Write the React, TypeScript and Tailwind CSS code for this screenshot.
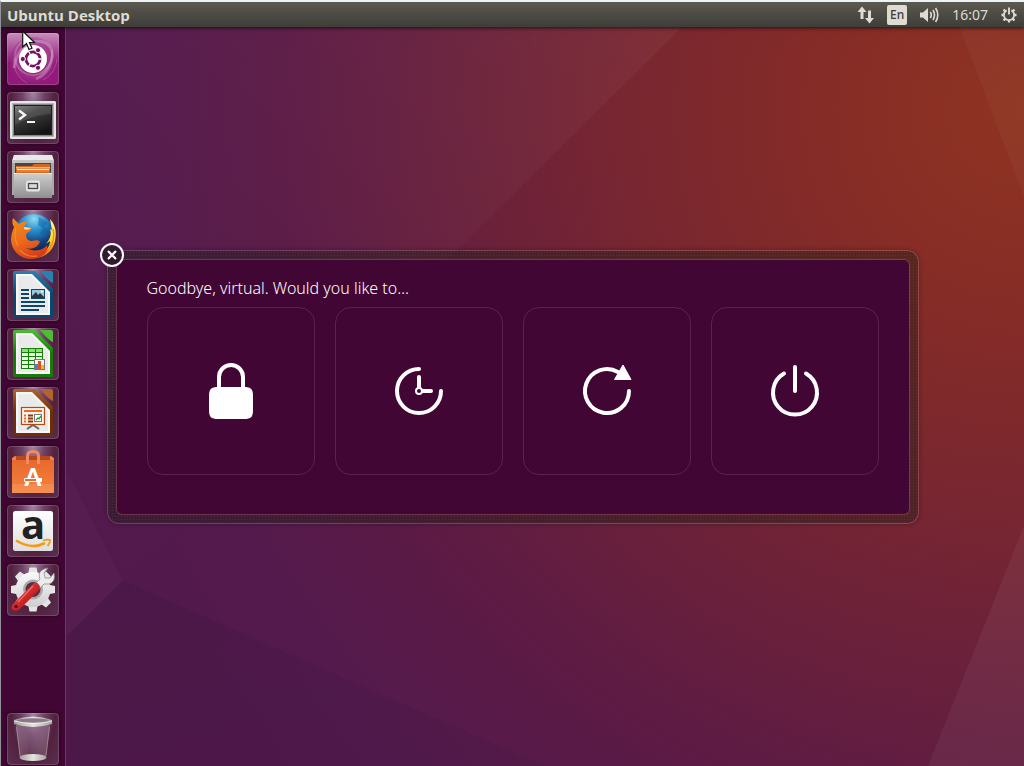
import type { ReactNode } from "react";

function Wallpaper() {
  return (
    <svg
      className="absolute inset-0 h-full w-full"
      viewBox="0 0 1024 766"
      preserveAspectRatio="none"
      aria-hidden="true"
    >
      <defs>
        <radialGradient id="wall" gradientUnits="userSpaceOnUse" cx="1024" cy="110" r="1000">
          <stop offset="0" stopColor="#8f3421" />
          <stop offset="0.2" stopColor="#862c27" />
          <stop offset="0.4" stopColor="#782631" />
          <stop offset="0.58" stopColor="#68203c" />
          <stop offset="0.75" stopColor="#5b1a46" />
          <stop offset="0.9" stopColor="#541a4e" />
          <stop offset="1" stopColor="#52194c" />
        </radialGradient>
        <linearGradient id="facet" x1="1" y1="0" x2="0" y2="1">
          <stop offset="0" stopColor="#fff" stopOpacity="0.04" />
          <stop offset="0.5" stopColor="#fff" stopOpacity="0.015" />
          <stop offset="1" stopColor="#fff" stopOpacity="0" />
        </linearGradient>
        <linearGradient id="shade" x1="0" y1="0" x2="1" y2="1">
          <stop offset="0" stopColor="#2b1236" stopOpacity="0.18" />
          <stop offset="1" stopColor="#2b1236" stopOpacity="0.1" />
        </linearGradient>
      </defs>
      <rect width="1024" height="766" fill="url(#wall)" />
      <path d="M0 0H707L122 580L66 470L0 350Z" fill="url(#facet)" />
      <path d="M66 470L122 580L66 636Z" fill="#fff" fillOpacity="0.025" />
      <path d="M122 580L545 766H0V700Z" fill="url(#shade)" />
      <path d="M950 0H1024V195Z" fill="#fff" fillOpacity="0.03" />
      <path d="M1024 525V766H928Z" fill="#fff" fillOpacity="0.05" />
    </svg>
  );
}

function Art({ children }: { children: ReactNode }) {
  return (
    <svg className="h-full w-full overflow-visible" viewBox="0 0 52 52" aria-hidden="true">
      {children}
    </svg>
  );
}

function DashArt() {
  return (
    <Art>
      <defs>
        <radialGradient id="dashGlow" cx="0.5" cy="0.5" r="0.6">
          <stop offset="0" stopColor="#d58cc4" />
          <stop offset="0.6" stopColor="#a3388c" stopOpacity="0.7" />
          <stop offset="1" stopColor="#8f1a78" stopOpacity="0" />
        </radialGradient>
        <linearGradient id="dashTop" x1="0" y1="0" x2="0" y2="1">
          <stop offset="0" stopColor="#fff" stopOpacity="0.5" />
          <stop offset="1" stopColor="#fff" stopOpacity="0" />
        </linearGradient>
      </defs>
      <rect width="52" height="52" rx="3" fill="#911a7a" />
      <rect width="52" height="30" rx="3" fill="url(#dashTop)" />
      <circle cx="26" cy="27" r="23" fill="url(#dashGlow)" />
      <path d="M7 35C10 15 25 4 39 10C51 17 45 39 29 46" fill="none" stroke="#fff" strokeOpacity="0.25" strokeWidth="3" />
      <path d="M45 17C47 36 30 47 16 39C5 31 6 16 15 9" fill="none" stroke="#fff" strokeOpacity="0.2" strokeWidth="2" />
      <path d="M20 50C9 44 6 33 7 25M36 47C44 43 49 36 50 26" fill="none" stroke="#fff" strokeOpacity="0.2" strokeWidth="1" />
      <circle cx="26" cy="27" r="14.5" fill="#6b0f58" fillOpacity="0.4" />
      <circle cx="26" cy="26" r="14" fill="#fff" />
      <circle cx="26" cy="26" r="7" fill="none" stroke="#74145f" strokeWidth="3" />
      <path d="M26 26L34.5 26M26 26L21.7 18.5M26 26L21.7 33.5" stroke="#fff" strokeWidth="1.3" />
      <g fill="#74145f" stroke="#fff" strokeWidth="1">
        <circle cx="15.8" cy="26" r="2.6" />
        <circle cx="31" cy="17.2" r="2.6" />
        <circle cx="31" cy="34.8" r="2.6" />
      </g>
      <circle cx="26" cy="26" r="5.5" fill="#fff" />
    </Art>
  );
}

function TerminalArt() {
  return (
    <Art>
      <defs>
        <linearGradient id="termScreen" x1="0" y1="0" x2="0.5" y2="1">
          <stop offset="0" stopColor="#7b7b7b" />
          <stop offset="0.4" stopColor="#3f3f3f" />
          <stop offset="1" stopColor="#151515" />
        </linearGradient>
      </defs>
      <rect x="3" y="9" width="46" height="38" rx="1.5" fill="#b5b5b5" />
      <rect x="4" y="10" width="44" height="36" rx="1" fill="none" stroke="#e6e6e6" strokeWidth="2" />
      <rect x="6.500" y="12.500" width="39" height="31" fill="url(#termScreen)" stroke="#858585" />
      <rect x="7.500" y="13.500" width="37" height="29" fill="none" stroke="#1e1e1e" />
      <path d="M8 14H44V22C30 23 18 27 8 33Z" fill="#fff" fillOpacity="0.1" />
      <path d="M12 18.500L18 23L12 27.500" fill="none" stroke="#f5f5f5" strokeWidth="2.4" />
      <path d="M20 30H28" stroke="#f5f5f5" strokeWidth="2" />
    </Art>
  );
}

function FilesArt() {
  return (
    <Art>
      <defs>
        <linearGradient id="filesFront" x1="0" y1="0" x2="0" y2="1">
          <stop offset="0" stopColor="#cfcfcf" />
          <stop offset="1" stopColor="#8f8f8f" />
        </linearGradient>
      </defs>
      <path d="M7 4H45L47 10V44H5V10Z" fill="#a8a8a8" />
      <path d="M7 4H45L47 10H5Z" fill="#e9e9e9" />
      <rect x="5" y="9" width="42" height="3" fill="#c4c4c4" />
      <rect x="8" y="12" width="36" height="10" fill="#474747" />
      <path d="M9 15H25L27 13H43V22H9Z" fill="#d9661e" />
      <rect x="9" y="16" width="34" height="1.500" fill="#f5b883" />
      <rect x="10" y="18" width="32" height="3" fill="#f07c2d" />
      <rect x="10" y="18" width="32" height="1" fill="#fff0d8" />
      <path d="M7 22H45V47H7Z" fill="url(#filesFront)" />
      <path d="M7 22.500H45" stroke="#ededed" />
      <rect x="19" y="29.500" width="14" height="11" rx="2" fill="#e4e4e4" />
      <rect x="21.500" y="32.500" width="9" height="5" fill="#d9d9d9" stroke="#484848" strokeWidth="1.300" />
    </Art>
  );
}

function FirefoxArt() {
  return (
    <Art>
      <defs>
        <radialGradient id="ffGlobe" cx="0.5" cy="0.12" r="0.8">
          <stop offset="0" stopColor="#8fdcf5" />
          <stop offset="0.35" stopColor="#2a91cf" />
          <stop offset="0.75" stopColor="#12427f" />
          <stop offset="1" stopColor="#0c2757" />
        </radialGradient>
        <linearGradient id="ffFox" x1="0.2" y1="0" x2="0.6" y2="1">
          <stop offset="0" stopColor="#ee8a1c" />
          <stop offset="0.5" stopColor="#ed6c1c" />
          <stop offset="1" stopColor="#d4391a" />
        </linearGradient>
        <linearGradient id="ffTail" x1="0" y1="0" x2="0" y2="1">
          <stop offset="0" stopColor="#fff5a0" />
          <stop offset="0.5" stopColor="#ffdc30" />
          <stop offset="1" stopColor="#ef7d1a" />
        </linearGradient>
      </defs>
      <circle cx="27" cy="24" r="20" fill="url(#ffGlobe)" />
      <path d="M32 7L40 13L37 17L42 20L38 26L33 23L36 18L31 15Z" fill="#0f5f9d" fillOpacity="0.5" />
      <path d="M43 9C48 14 50 21 48 31C46 41 38 47 29 48C37 44 43 37 43 31L39 34C43 29 45 24 43 19L45 20Z" fill="url(#ffTail)" />
      <path d="M46 19C49 31 43 41 34 46" fill="none" stroke="#f28a1c" strokeWidth="1.500" />
      <path d="M6 8L12 14C14 12 18 11 21 11L17 17L25 18C24 21 21 22 19 24C19 29 21 31 25 31C28 31 30 29 33 32C30 38 25 40 19 38C26 42 36 41 40 35C42 42 36 48 26 49C13 50 4 40 4 29C4 24 6 20 7 17C5 14 5 11 6 8Z" fill="url(#ffFox)" />
      <path d="M9 18C7 25 8 31 11 36M13 40C18 46 25 47 30 46" fill="none" stroke="#f99b2d" strokeOpacity="0.6" strokeWidth="1.400" />
      <path d="M17 17L24 18C22 20 19 20 17 19Z" fill="#ffd79a" />
    </Art>
  );
}

function OfficePage({ dark, light, id, children }: { dark: string; light: string; id: string; children: ReactNode }) {
  return (
    <Art>
      <defs>
        <linearGradient id={id} x1="0" y1="0" x2="0" y2="1">
          <stop offset="0" stopColor={light} />
          <stop offset="0.5" stopColor={dark} />
          <stop offset="1" stopColor={dark} />
        </linearGradient>
      </defs>
      <path d="M8 2H28L46 20V49H8Q6 49 6 47V4Q6 2 8 2Z" fill={`url(#${id})`} />
      <path d="M9 5H25L43 23V46H9Z" fill="#f7f7f7" />
      <path d="M11 7H24L41 24V44H11Z" fill="#eaeaea" />
      <path d="M33 2H44Q46 2 46 4V14Q41 12 33 2Z" fill={light} />
      <path d="M33 2L46 14" stroke={light} strokeOpacity="0.5" />
      {children}
    </Art>
  );
}

function WriterArt() {
  return (
    <OfficePage id="writerEdge" dark="#0a4770" light="#2a7fb5">
      <g fill="#0a4770">
        <rect x="14" y="20" width="8" height="2" />
        <rect x="14" y="24" width="8" height="2" />
        <rect x="14" y="28" width="8" height="2" />
        <rect x="14" y="32" width="24" height="2" />
        <rect x="14" y="36" width="24" height="2" />
        <rect x="14" y="40" width="18" height="2" />
      </g>
      <rect x="24.500" y="20.500" width="13" height="9" fill="#93c8e8" stroke="#0a4770" />
      <path d="M25 29V27L29 23L31 26L33 24L37 28V29Z" fill="#333" />
      <circle cx="35" cy="22.500" r="1.200" fill="#f9f1a0" />
    </OfficePage>
  );
}

function CalcArt() {
  return (
    <OfficePage id="calcEdge" dark="#177a0a" light="#4fbb37">
      <rect x="14.500" y="20.500" width="21" height="20" fill="#e8fbe0" stroke="#138006" />
      <rect x="15" y="21" width="20" height="3" fill="#90dd79" />
      <path d="M15 24.500H35M15 28.500H35M15 32.500H35M15 36.500H35M21.500 21V40M28.500 21V40" stroke="#138006" />
      <rect x="27.500" y="31.500" width="10" height="10" fill="#f4f4f4" stroke="#777" />
      <rect x="28" y="36" width="3" height="5" fill="#3b86cc" />
      <rect x="31" y="33" width="3" height="8" fill="#dd5515" />
      <rect x="34" y="37" width="3" height="4" fill="#edb72a" />
    </OfficePage>
  );
}

function ImpressArt() {
  return (
    <OfficePage id="impressEdge" dark="#6f2d08" light="#b1642c">
      <path d="M20 42L26 38L32 42" fill="none" stroke="#666" strokeWidth="2" />
      <rect x="14.500" y="20.500" width="23" height="17" fill="#fff1e8" stroke="#b04a12" strokeWidth="1.200" />
      <rect x="17" y="23" width="18" height="2" fill="#dd6f2a" />
      <path d="M17 28.500H19M17 31.500H19M17 34.500H19" stroke="#dd6f2a" strokeWidth="2" />
      <path d="M21 28.500H26M21 31.500H26M21 34.500H26" stroke="#8c380e" strokeWidth="2" />
      <rect x="27.500" y="27.500" width="7" height="7" fill="#fff" stroke="#777" />
      <path d="M29 33L31 31L32 32L34 29" fill="none" stroke="#27a135" strokeWidth="1.400" />
    </OfficePage>
  );
}

function SoftwareArt() {
  return (
    <Art>
      <defs>
        <linearGradient id="bag" x1="0" y1="0" x2="0" y2="1">
          <stop offset="0" stopColor="#e8692f" />
          <stop offset="1" stopColor="#f4833d" />
        </linearGradient>
      </defs>
      <path d="M5 13L7 10H45L47 13V16H5Z" fill="#b54a1c" />
      <path d="M5 12L9 10V15H5ZM47 12L43 10V15H47Z" fill="#ee8253" />
      <rect x="5" y="14" width="42" height="33" fill="url(#bag)" />
      <rect x="5" y="38" width="42" height="9" fill="#fff" fillOpacity="0.1" />
      <path d="M20.500 18V10Q20.500 5.500 26 5.500Q31.500 5.500 31.500 10V18" fill="none" stroke="#ef8b65" strokeWidth="3" />
      <text x="26" y="40" textAnchor="middle" fontFamily="Lato, sans-serif" fontWeight="900" fontSize="24" fill="#fff">A</text>
      <rect x="17" y="32" width="18" height="4" rx="1" fill="#fff" />
      <rect x="18" y="33" width="11" height="2" fill="#eb6b2c" />
    </Art>
  );
}

function AmazonArt() {
  return (
    <Art>
      <defs>
        <linearGradient id="amazonTile" x1="0" y1="0" x2="0" y2="1">
          <stop offset="0" stopColor="#fff" />
          <stop offset="1" stopColor="#dedede" />
        </linearGradient>
      </defs>
      <rect x="6" y="6" width="40" height="40" rx="2.500" fill="url(#amazonTile)" />
      <text x="26" y="34" textAnchor="middle" fontFamily="'Open Sans', sans-serif" fontWeight="700" fontSize="40" fill="#222">a</text>
      <path d="M9 35.500Q25 45 38 38" fill="none" stroke="#f59a14" strokeWidth="2.600" />
      <path d="M36 35.500Q41 34 43 35Q43.500 37 40.500 41" fill="none" stroke="#f59a14" strokeWidth="1.800" />
    </Art>
  );
}

const gearTeeth = [0, 45, 90, 135, 180, 225, 270, 315];

function SettingsArt() {
  return (
    <Art>
      <defs>
        <linearGradient id="gearFill" x1="0" y1="0" x2="0" y2="1">
          <stop offset="0" stopColor="#fafafa" />
          <stop offset="1" stopColor="#cecece" />
        </linearGradient>
        <linearGradient id="handle" x1="0" y1="0" x2="1" y2="1">
          <stop offset="0" stopColor="#ef5d57" />
          <stop offset="0.6" stopColor="#c91e1e" />
          <stop offset="1" stopColor="#8d0c0c" />
        </linearGradient>
      </defs>
      <g fill="#e5e5e5">
        {gearTeeth.map((angle) => (
          <path key={angle} d="M21 11L22.500 3.500H29.500L31 11Z" transform={`rotate(${angle} 26 25.500)`} />
        ))}
      </g>
      <circle cx="26" cy="25.500" r="17.500" fill="url(#gearFill)" />
      <circle cx="26" cy="25.500" r="10" fill="#a9a9a9" />
      <circle cx="26" cy="25.500" r="7.500" fill="#5a2c4c" />
      <path d="M26 22L33 15Q30 8 37 5L41 4L37 9L38 14L43 14L47 9Q49 18 42 20L37 20L29 28Z" fill="#ececec" stroke="#8d8d8d" strokeWidth="0.800" />
      <path d="M27 19Q31 18 32 21Q34 23 32 26L14 44Q9 49 5 45Q4 42 7 39Z" fill="url(#handle)" />
      <path d="M26 22L11 38" stroke="#ff9b94" strokeOpacity="0.6" strokeWidth="1.300" />
      <circle cx="9" cy="42.500" r="1.800" fill="#650d12" />
    </Art>
  );
}

function TrashArt() {
  return (
    <Art>
      <defs>
        <linearGradient id="trashBody" x1="0" y1="0" x2="1" y2="0">
          <stop offset="0" stopColor="#fff" stopOpacity="0.25" />
          <stop offset="0.4" stopColor="#fff" stopOpacity="0.1" />
          <stop offset="1" stopColor="#fff" stopOpacity="0.22" />
        </linearGradient>
        <linearGradient id="trashRim" x1="0" y1="0" x2="1" y2="0">
          <stop offset="0" stopColor="#9f9f9c" />
          <stop offset="0.5" stopColor="#e4e4e0" />
          <stop offset="1" stopColor="#a5a5a2" />
        </linearGradient>
      </defs>
      <path d="M9 12H43L39 44Q26 50 13 44Z" fill="url(#trashBody)" />
      <path d="M9.500 14L13 43M42.500 14L39 43" stroke="#c9b6c5" strokeOpacity="0.5" />
      <ellipse cx="26" cy="44.500" rx="13.500" ry="3.500" fill="url(#trashRim)" />
      <path d="M7 7Q26 0 45 7V11Q26 17 7 11Z" fill="url(#trashRim)" />
      <ellipse cx="26" cy="7.500" rx="16" ry="2.200" fill="#8d7888" />
      <path d="M7 8Q26 13 45 8" fill="none" stroke="#fafaf5" strokeOpacity="0.7" />
    </Art>
  );
}

const apps = [
  { name: "Terminal", art: <TerminalArt /> },
  { name: "Files", art: <FilesArt /> },
  { name: "Firefox Web Browser", art: <FirefoxArt /> },
  { name: "LibreOffice Writer", art: <WriterArt /> },
  { name: "LibreOffice Calc", art: <CalcArt /> },
  { name: "LibreOffice Impress", art: <ImpressArt /> },
  { name: "Ubuntu Software", art: <SoftwareArt /> },
  { name: "Amazon", art: <AmazonArt /> },
  { name: "System Settings", art: <SettingsArt /> },
];

function LauncherTile({ name, children }: { name: string; children: ReactNode }) {
  return (
    <button
      type="button"
      aria-label={name}
      className="relative size-[52px] shrink-0 rounded bg-[radial-gradient(ellipse_at_50%_0%,#a487a0_0%,#6f4267_30%,#52213f_60%,#5a2e50_100%)] shadow-[0_0_3px_#1b0015]"
    >
      {children}
      <span className="pointer-events-none absolute inset-0 rounded border border-white/15" />
    </button>
  );
}

function Pointer() {
  return (
    <svg className="pointer-events-none absolute -top-1 left-[15px] h-[22px] w-[14px]" viewBox="0 0 14 22" aria-hidden="true">
      <path d="M0.700 2V18L4.500 14.500L7 20.500L10 19.200L7.500 13.500H12.500Z" fill="#fff" stroke="#111" strokeWidth="1.200" />
    </svg>
  );
}

function Launcher() {
  return (
    <nav
      aria-label="Launcher"
      className="relative flex w-[65px] shrink-0 flex-col items-center gap-[7px] border-r border-[#6c3a61] bg-[#410633] pt-1.5 pb-px"
    >
      <div className="relative h-[52px]">
        <LauncherTile name="Search your computer">
          <DashArt />
        </LauncherTile>
        <Pointer />
      </div>
      {apps.map((app) => (
        <LauncherTile key={app.name} name={app.name}>
          {app.art}
        </LauncherTile>
      ))}
      <div className="mt-auto h-[52px]">
        <LauncherTile name="Trash">
          <TrashArt />
        </LauncherTile>
      </div>
    </nav>
  );
}

function TopPanel() {
  return (
    <header className="relative z-10 flex h-[25px] shrink-0 items-center bg-linear-to-b from-[#5b5950] to-[#3e3d38] pr-[7px] pl-1.5 text-[#dfdbd2] shadow-[0_1px_4px_#000000b0]">
      <h1 className="font-['Open_Sans',sans-serif] text-[15px] leading-6 font-bold">Ubuntu Desktop</h1>
      <div className="ml-auto flex items-center gap-[13px]">
        <button type="button" aria-label="Network">
          <svg className="h-[18px] w-[17px]" viewBox="0 0 17 18" fill="currentColor" aria-hidden="true">
            <path d="M5 0.500L9.500 6H6.500V13H3.500V6H0.500Z" />
            <path d="M12.500 17.500L8 12H11V4.500H14V12H17Z" />
          </svg>
        </button>
        <button
          type="button"
          className="flex size-5 items-center justify-center rounded-xs bg-[#dfdbd2] font-['Noto_Sans',sans-serif] text-xs font-medium text-[#3c3b37]"
        >
          En
        </button>
        <button type="button" aria-label="Sound">
          <svg className="h-[18px] w-[19px]" viewBox="0 0 19 18" aria-hidden="true">
            <path d="M0 6.500H3L8 2V16L3 11.500H0Z" fill="currentColor" />
            <path d="M10.300 6Q12.300 9 10.300 12M13 4Q16 9 13 14M15.600 2Q20 9 15.600 16" fill="none" stroke="currentColor" strokeWidth="1.600" />
          </svg>
        </button>
        <button type="button" className="font-['Noto_Sans',sans-serif] text-sm leading-6">
          16:07
        </button>
        <button type="button" aria-label="System">
          <svg className="size-4" viewBox="0 0 17 17" aria-hidden="true">
            <path d="M6 3.600A5.500 5.500 0 1 0 11 3.600" fill="none" stroke="currentColor" strokeWidth="2" />
            <path d="M8.500 0.500V8" stroke="currentColor" strokeWidth="2" />
            <path d="M0.500 8.500H3M14 8.500H16.500M8.500 14V16.500M2.700 2.700L4.600 4.600M14.300 2.700L12.400 4.600M2.700 14.300L4.600 12.400M14.300 14.300L12.400 12.400" stroke="currentColor" strokeWidth="2.400" />
          </svg>
        </button>
      </div>
    </header>
  );
}

const actions = [
  {
    name: "Lock",
    art: (
      <>
        <path d="M24 34V22A12 12 0 0 1 48 22V34" fill="none" stroke="#fff" strokeWidth="4" />
        <path d="M14 41C14 34 16 32 23 32H49C56 32 58 34 58 41V55C58 62 56 64 49 64H23C16 64 14 62 14 55Z" />
      </>
    ),
  },
  {
    name: "Suspend",
    art: (
      <>
        <path d="M36 14A22 22 0 1 0 58 36" fill="none" stroke="#fff" strokeWidth="4" strokeLinecap="round" />
        <path d="M36 22V32M40 36H48" fill="none" stroke="#fff" strokeWidth="4" strokeLinecap="round" />
        <circle cx="36" cy="36" r="3" fill="none" stroke="#fff" strokeWidth="2" />
      </>
    ),
  },
  {
    name: "Restart",
    art: (
      <>
        <path d="M47 17A22 22 0 1 0 58 36" fill="none" stroke="#fff" strokeWidth="4" strokeLinecap="round" />
        <path d="M52 10L60 24.500H43.500Z" stroke="#fff" strokeLinejoin="round" />
      </>
    ),
  },
  {
    name: "Shut Down",
    art: (
      <>
        <path d="M25 18.500A22 22 0 1 0 47 18.500" fill="none" stroke="#fff" strokeWidth="4" strokeLinecap="round" />
        <path d="M36 12V36" fill="none" stroke="#fff" strokeWidth="4" strokeLinecap="round" />
      </>
    ),
  },
];

function SessionDialog() {
  return (
    <section
      role="dialog"
      aria-labelledby="session-title"
      className="relative w-full max-w-[812px] rounded-xl border border-white/15 bg-[#201e19]/45 bg-[radial-gradient(circle,#ffffff12_0.6px,transparent_1px)] bg-size-[3px_3px] bg-clip-padding p-2 shadow-[0_0_5px_#00000050]"
    >
      <button
        type="button"
        aria-label="Close"
        className="absolute -top-2 -left-2 size-6"
      >
        <svg className="size-6" viewBox="0 0 24 24" aria-hidden="true">
          <circle cx="12" cy="12" r="11" fill="#341a30" stroke="#fff" strokeWidth="2" />
          <path d="M8 8L16 16M16 8L8 16" stroke="#fff" strokeWidth="2.200" />
        </svg>
      </button>
      <div className="rounded-md border border-[#ff8090]/25 bg-[#410633] bg-clip-padding px-[30px] pt-4 pb-[39px]">
        <h2 id="session-title" className="h-[31px] font-['Noto_Sans',sans-serif] text-base leading-6 font-light text-white">
          Goodbye, virtual. Would you like to…
        </h2>
        <div className="grid grid-cols-4 gap-5">
          {actions.map((action) => (
            <button
              key={action.name}
              type="button"
              aria-label={action.name}
              className="flex aspect-square items-center justify-center rounded-2xl border border-white/12"
            >
              <svg className="size-[72px]" viewBox="0 0 72 72" fill="#fff" aria-hidden="true">
                {action.art}
              </svg>
            </button>
          ))}
        </div>
      </div>
    </section>
  );
}

export default function App() {
  return (
    <div className="relative flex min-h-screen flex-col overflow-hidden border-t-2 border-l border-t-[#eef3f4] border-l-[#92929a] bg-[#52194c]">
      <Wallpaper />
      <TopPanel />
      <main className="relative flex flex-1">
        <Launcher />
      </main>
      <div className="absolute inset-0 flex items-center justify-center p-4 pt-[22px]">
        <SessionDialog />
      </div>
    </div>
  );
}
